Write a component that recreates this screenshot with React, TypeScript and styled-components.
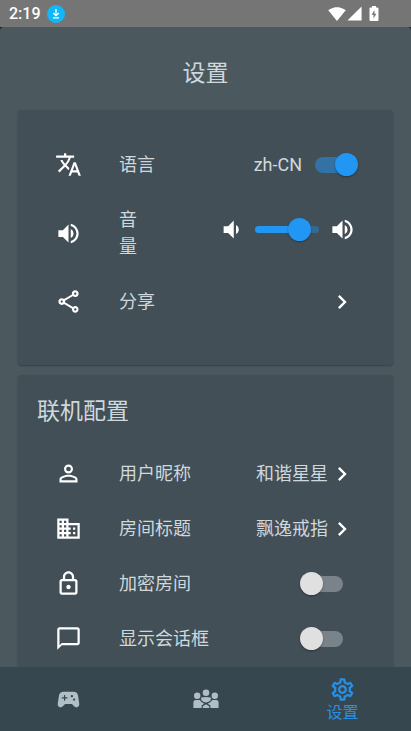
import React, { useState } from "react";
import styled, { createGlobalStyle } from "styled-components";
import {
  MdTranslate,
  MdVolumeUp,
  MdVolumeDown,
  MdChevronRight,
  MdPersonOutline,
  MdDomain,
  MdOutlineLock,
  MdChatBubbleOutline,
  MdSportsEsports,
  MdOutlineShare,
  MdOutlineSettings,
  MdSignalWifi4Bar,
  MdSignalCellular4Bar,
} from "react-icons/md";

const GlobalStyle = createGlobalStyle`
  *, *::before, *::after { box-sizing: border-box; }
  html, body { margin: 0; height: 100%; background: #1d2427; }
  body { font-family: Roboto, "Noto Sans CJK SC", sans-serif; color: #cfd8dc; overflow: hidden; }
  #root { height: 100%; }
  button, input { font: inherit; color: inherit; margin: 0; }
`;

const Screen = styled.div`
  display: flex;
  flex-direction: column;
  height: 100%;
`;

const StatusBar = styled.header`
  display: flex;
  flex: none;
  align-items: center;
  height: 27px;
  padding: 0 32px 0 9px;
  background: #757575;
  color: #fff;
`;

const Clock = styled.time`
  flex: 1;
  display: flex;
  align-items: center;
  gap: 6px;
  font-size: 16px;
  font-weight: 500;
  line-height: 27px;
`;

const StatusIcons = styled.div`
  display: flex;
  align-items: center;
  svg { display: block; }
`;

const Battery = styled.svg`
  margin-left: 6px;
`;

const Content = styled.main`
  flex: 1;
  min-height: 0;
  display: flex;
  flex-direction: column;
  overflow: hidden;
  padding: 0 18px;
  background: #4b585e;
  border-radius: 4px 4px 0 0;
`;

const Title = styled.h1`
  flex: none;
  margin: 0;
  padding: 30px 0 19px;
  font-size: 23px;
  font-weight: 400;
  line-height: 34px;
  text-align: center;
`;

const Card = styled.section<{ $roomy?: boolean }>`
  flex: none;
  margin-bottom: 10px;
  padding: 18px 19px ${(p) => (p.$roomy ? 27 : 18)}px;
  border-radius: 4px;
  background: #424f57;
  box-shadow: 0 1px 2px rgba(0, 0, 0, 0.3);
`;

const CardTitle = styled.h2`
  margin: 0 0 15px;
  font-size: 23px;
  font-weight: 400;
  line-height: 38px;
`;

const Row = styled.div<{ $height?: number }>`
  display: flex;
  align-items: center;
  height: ${(p) => p.$height ?? 55}px;
  padding: 0 16px 0 18px;
`;

const Leading = styled.span`
  flex: none;
  display: flex;
  width: 64px;
  color: #fff;
`;

const Label = styled.label<{ $narrow?: boolean }>`
  flex: ${(p) => (p.$narrow ? "0 0 32px" : 1)};
  font-size: 18px;
  line-height: 27px;
`;

const Action = styled.button`
  display: flex;
  align-items: center;
  margin-right: 2px;
  padding: 0;
  border: 0;
  background: none;
  font-size: 18px;
  line-height: 27px;
  svg { color: #fff; }
`;

const Value = styled.span`
  margin-right: 13px;
  font-size: 18px;
  line-height: 27px;
`;

const Switch = styled.input<{ $flush?: boolean }>`
  appearance: none;
  flex: none;
  display: grid;
  align-items: center;
  width: 43px;
  height: 24px;
  margin-right: ${(p) => (p.$flush ? 0 : 15)}px;
  &::before, &::after {
    content: "";
    grid-area: 1 / 1;
  }
  &::before {
    justify-self: end;
    width: 36px;
    height: 16px;
    border-radius: 8px;
    background: #7b838a;
  }
  &::after {
    justify-self: start;
    width: 23px;
    height: 23px;
    border-radius: 50%;
    background: #e0e0e0;
    box-shadow: 0 1px 2px rgba(0, 0, 0, 0.35);
  }
  &:checked::before { justify-self: start; background: #3372a4; }
  &:checked::after { justify-self: end; background: #2196f3; }
`;

const VolumeControl = styled.div`
  flex: 1;
  display: flex;
  align-items: center;
  justify-content: flex-end;
  gap: 10px;
  height: 24px;
  margin: 0 2px 8px 0;
  color: #fff;
`;

const Slider = styled.input<{ $fill: number }>`
  appearance: none;
  width: 64px;
  height: 24px;
  background: none;
  &::-webkit-slider-runnable-track {
    height: 7px;
    border-radius: 4px;
    background: linear-gradient(90deg, #2196f3 ${(p) => p.$fill}%, #346990 ${(p) => p.$fill}%);
  }
  &::-webkit-slider-thumb {
    appearance: none;
    width: 23px;
    height: 23px;
    margin-top: -8px;
    border-radius: 50%;
    background: #2196f3;
    box-shadow: 0 1px 2px rgba(0, 0, 0, 0.3);
  }
`;

const NavBar = styled.nav`
  flex: none;
  display: flex;
  height: 64px;
  background: #37474f;
`;

const NavItem = styled.button<{ $active?: boolean }>`
  flex: 1;
  display: flex;
  flex-direction: column;
  align-items: center;
  justify-content: center;
  padding: 0;
  border: 0;
  background: none;
  color: ${(p) => (p.$active ? "#2b8fe0" : "#b0bec5")};
  font-size: 16px;
  line-height: 20px;
`;

const DownloadBadge = () => (
  <svg width="18" height="18" viewBox="0 0 18 18" aria-hidden="true">
    <circle cx="9" cy="9" r="9" fill="#12b7f9" />
    <path d="M9 4v6.500M6.200 8L9 10.700l2.800-2.700M6 12.800h6" fill="none" stroke="#fff" strokeWidth="1.300" />
  </svg>
);

const BatteryIcon = () => (
  <Battery width="10" height="16" viewBox="0 0 10 16" aria-hidden="true">
    <path d="M3 0h4v1.500h1.500q1 0 1 1V14q0 1-1 1h-7q-1 0-1-1V2.500q0-1 1-1H3z" fill="#fff" />
    <path d="M5.500 4L2.600 8.800h1.900v3.700L7.400 7.700H5.500z" fill="#757575" />
  </Battery>
);

const PeopleIcon = () => (
  <svg width="26" height="20" viewBox="0 0 26 20" fill="currentColor" aria-hidden="true">
    <circle cx="13" cy="3.700" r="3.300" />
    <circle cx="4.200" cy="6.800" r="3.200" />
    <circle cx="21.800" cy="6.800" r="3.200" />
    <path d="M8.200 8.600Q13 7.200 17.800 8.600Q18.300 9.800 17.400 11.200Q15.500 13.500 13 13.600Q10.500 13.500 8.600 11.200Q7.700 9.800 8.200 8.600z" />
    <path d="M.4 19v-5.500q0-2.500 2.500-2.500h3.800q1.700 2.600 4.600 3.700L8.600 16.500V19z" />
    <path d="M25.600 19v-5.500q0-2.500-2.500-2.500h-3.800q-1.700 2.600-4.600 3.700l2.700 1.800V19z" />
    <path d="M9.800 17.200L13 15.300l3.200 1.900V19H9.800z" />
  </svg>
);

type SwitchRowProps = { id: string; icon: React.ReactNode; label: string };

function SwitchRow({ id, icon, label }: SwitchRowProps) {
  return (
    <Row>
      <Leading>{icon}</Leading>
      <Label htmlFor={id}>{label}</Label>
      <Switch id={id} type="checkbox" role="switch" />
    </Row>
  );
}

type LinkRowProps = { id: string; icon: React.ReactNode; label: string; value?: string; height?: number };

function LinkRow({ id, icon, label, value, height }: LinkRowProps) {
  return (
    <Row $height={height}>
      <Leading>{icon}</Leading>
      <Label htmlFor={id}>{label}</Label>
      <Action id={id} type="button" aria-label={value ? `${label} ${value}` : label}>
        {value}
        <MdChevronRight size={28} />
      </Action>
    </Row>
  );
}

export default function App() {
  const [volume, setVolume] = useState(81);
  return (
    <>
      <GlobalStyle />
      <Screen>
        <StatusBar>
          <Clock>
            2:19
            <DownloadBadge />
          </Clock>
          <StatusIcons>
            <MdSignalWifi4Bar size={18} />
            <MdSignalCellular4Bar size={17} />
            <BatteryIcon />
          </StatusIcons>
        </StatusBar>
        <Content>
          <Title>设置</Title>
          <Card $roomy>
            <Row $height={73}>
              <Leading><MdTranslate size={27} /></Leading>
              <Label htmlFor="language">语言</Label>
              <Value>zh-CN</Value>
              <Switch id="language" type="checkbox" role="switch" defaultChecked $flush />
            </Row>
            <Row $height={64}>
              <Leading><MdVolumeUp size={27} /></Leading>
              <Label htmlFor="volume" $narrow>音量</Label>
              <VolumeControl>
                <MdVolumeDown size={27} />
                <Slider
                  id="volume"
                  type="range"
                  min={0}
                  max={100}
                  value={volume}
                  $fill={volume}
                  onChange={(e) => setVolume(Number(e.target.value))}
                />
                <MdVolumeUp size={27} />
              </VolumeControl>
            </Row>
            <LinkRow id="share" icon={<MdOutlineShare size={27} />} label="分享" height={73} />
          </Card>
          <Card>
            <CardTitle>联机配置</CardTitle>
            <LinkRow id="nickname" icon={<MdPersonOutline size={27} />} label="用户昵称" value="和谐星星" />
            <LinkRow id="room" icon={<MdDomain size={27} />} label="房间标题" value="飘逸戒指" />
            <SwitchRow id="locked" icon={<MdOutlineLock size={27} />} label="加密房间" />
            <SwitchRow id="chat" icon={<MdChatBubbleOutline size={27} />} label="显示会话框" />
          </Card>
        </Content>
        <NavBar>
          <NavItem type="button" aria-label="游戏"><MdSportsEsports size={27} /></NavItem>
          <NavItem type="button" aria-label="联机"><PeopleIcon /></NavItem>
          <NavItem type="button" $active aria-current="page"><MdOutlineSettings size={27} />设置</NavItem>
        </NavBar>
      </Screen>
    </>
  );
}
